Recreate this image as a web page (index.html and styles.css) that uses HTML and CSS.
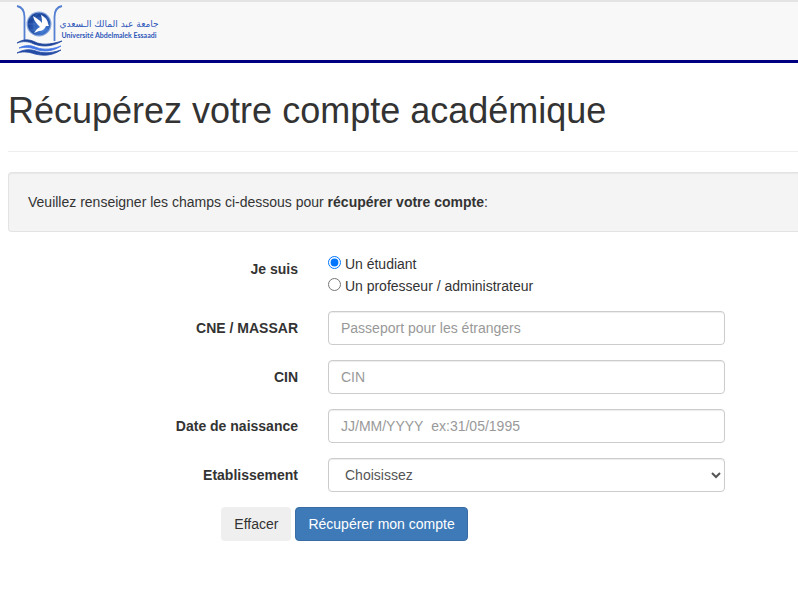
FILE: index.html
```
<!DOCTYPE html>
<html lang="fr">
  <head>
    <meta charset="UTF-8" />
    <meta name="viewport" content="width=device-width, initial-scale=1.0" />
    <title>Récupérez votre compte académique</title>
    <link rel="stylesheet" href="styles.css">
  </head>
  <body>
    <header class="navbar">
      <a class="brand" href="#" aria-label="Université Abdelmalek Essaadi">
        <svg width="144" height="54" viewBox="0 0 144 54" xmlns="http://www.w3.org/2000/svg">
          <defs>
            <radialGradient id="globe" cx="0.65" cy="0.7" r="0.6">
              <stop offset="0" stop-color="#4a86e0" />
              <stop offset="1" stop-color="#1d479c" />
            </radialGradient>
          </defs>
          <!-- Pillars -->
          <g fill="none" stroke="#5580d2" stroke-width="1.8">
            <path d="M1 4c5 1 7.500 5 7.500 11v24" />
            <path d="M46 4c-5 1-7.500 5-7.500 11v24" />
          </g>
          <!-- Globe and dove -->
          <circle cx="23" cy="22" r="12.500" fill="#87a6dc" />
          <circle cx="23" cy="22" r="11.300" fill="url(#globe)" />
          <g fill="none" stroke="#5f8cd6" stroke-width="0.4">
            <path d="M12 22h22M14 16h18M14 28h18" />
            <ellipse cx="23" cy="22" rx="5" ry="11" />
          </g>
          <path d="M17 14c3 2 7 4 9 7 0-2 0-5-1-8 4 2 7 5 7 9l1 2-3 0c-1 3-4 5-7 5l-5 2 3-4 3-2c-3-3-6-6-7-11z" fill="#fff" />
          <!-- Waves -->
          <g stroke-width="0.8" stroke-linejoin="round">
            <path d="M1 41c6-4 12-4 18-1s14 3 27-1c-10 6-20 6-28 3-6-3-11-3-17-1z" fill="#1e459c" stroke="#1e459c" />
            <path d="M3 46c6-3 11-3 16-1s13 4 26-1c-9 6-18 6-26 3-6-2-10-2-16-1z" fill="#3f74e6" stroke="#3f74e6" />
            <path d="M1 51c7-4 13-4 19-2s13 3 25-1c-9 6-18 6-26 4-6-2-11-3-18-1z" fill="#244ba5" stroke="#244ba5" />
          </g>
          <text class="brand-ar" x="93" y="25" text-anchor="middle">جامعة عبد المالك الـسعدي</text>
          <text class="brand-fr" x="93" y="36" text-anchor="middle">Université Abdelmalek Essaadi</text>
        </svg>
      </a>
    </header>

    <main>
      <div class="page-header">
        <h1>Récupérez votre compte académique</h1>
      </div>

      <p class="well">
        Veuillez renseigner les champs ci-dessous pour
        <strong>récupérer votre compte</strong>:
      </p>

      <form>
        <div class="form-group" role="radiogroup" aria-labelledby="profil">
          <span class="control-label" id="profil">Je suis</span>
          <div class="radios">
            <label><input type="radio" name="profil" value="etudiant" checked /> Un étudiant</label>
            <label><input type="radio" name="profil" value="professeur" /> Un professeur / administrateur</label>
          </div>
        </div>

        <div class="form-group">
          <label class="control-label" for="cne">CNE / MASSAR</label>
          <input class="form-control" type="text" id="cne" placeholder="Passeport pour les étrangers" />
        </div>

        <div class="form-group">
          <label class="control-label" for="cin">CIN</label>
          <input class="form-control" type="text" id="cin" placeholder="CIN" />
        </div>

        <div class="form-group">
          <label class="control-label" for="naissance">Date de naissance</label>
          <input class="form-control" type="text" id="naissance" placeholder="JJ/MM/YYYY&nbsp; ex:31/05/1995" />
        </div>

        <div class="form-group">
          <label class="control-label" for="etablissement">Etablissement</label>
          <select class="form-control" id="etablissement">
            <option>Choisissez</option>
          </select>
        </div>

        <div class="actions">
          <button class="btn" type="reset">Effacer</button>
          <button class="btn btn-primary" type="submit">Récupérer mon compte</button>
        </div>
      </form>
    </main>
  </body>
</html>
```
FILE: styles.css
```
* {
  box-sizing: border-box;
}
body {
  margin: 0;
  color: #333;
  font-size: 14px;
  line-height: 20px;
  background-color: #fff;
  font-family: "Liberation Sans", Arial, sans-serif;
}

/* Navbar */
.navbar {
  padding-left: 16px;
  border-top: 2px solid #e4e4e4;
  border-bottom: 3px solid #000080;
  background-color: #f8f8f8;
}
.brand {
  display: block;
  width: 144px;
  height: 58px;
}
.brand svg {
  display: block;
}
.brand text {
  fill: #2f57b8;
}
.brand-ar {
  font: 9px "DejaVu Sans", sans-serif;
}
.brand-fr {
  font: bold 7px Lato, sans-serif;
}

/* Page */
main {
  padding: 28px 0 20px 8px;
}
.page-header {
  padding-bottom: 20px;
  margin-bottom: 20px;
  border-bottom: 1px solid #eee;
}
h1 {
  margin: 0;
  font-size: 36px;
  font-weight: 400;
  line-height: 40px;
}
.well {
  margin: 0 0 20px;
  padding: 19px;
  border: 1px solid #e3e3e3;
  border-right: 0;
  border-radius: 4px 0 0 4px;
  background-color: #f4f4f4;
  box-shadow: inset 0 1px 1px rgba(0, 0, 0, 0.05);
}

/* Form */
.form-group {
  display: grid;
  column-gap: 30px;
  margin-bottom: 15px;
  grid-template-columns: 290fr 397fr 43fr;
}
.control-label {
  padding-top: 7px;
  font-weight: 700;
  text-align: right;
}
.radios {
  display: grid;
  gap: 2px;
  padding-top: 2px;
}
.radios input {
  width: 13px;
  height: 13px;
  margin: 0;
}
.form-control {
  width: 100%;
  height: 34px;
  padding: 6px 12px;
  color: #555;
  font: inherit;
  border: 1px solid #ccc;
  border-radius: 4px;
  background-color: #fff;
  box-shadow: inset 0 1px 1px rgba(0, 0, 0, 0.075);
}
.form-control::placeholder {
  color: #999;
  opacity: 1;
}
.form-control:focus {
  outline: 0;
  border-color: #66afe9;
}

.actions {
  display: flex;
  gap: 4px;
  margin-left: 27%;
}
.btn {
  padding: 6px 12px;
  color: #333;
  font: inherit;
  cursor: pointer;
  border: 1px solid transparent;
  border-radius: 4px;
  background-color: #efefef;
}
.btn-primary {
  color: #fff;
  border-color: #376da4;
  background-color: #3e7ab8;
}
.btn-primary:hover {
  background-color: #286090;
}
```
